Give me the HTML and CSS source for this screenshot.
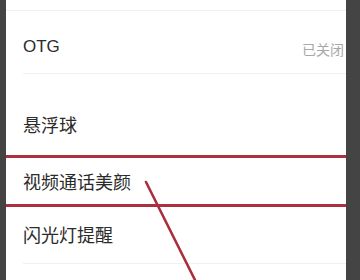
FILE: index.html
```html
<!DOCTYPE html>
<html lang="zh-CN">
<head>
<meta charset="utf-8">
<title>设置</title>
<link rel="stylesheet" href="styles.css">
</head>
<body>
<div class="frame">
  <div class="edge edge-left"></div>
  <div class="list">
    <div class="row row-top"></div>
    <div class="row row-otg">
      <span class="label label-latin">OTG</span>
      <span class="status">已关闭</span>
    </div>
    <div class="row row-float">
      <span class="label">悬浮球</span>
    </div>
    <div class="row row-video">
      <span class="label">视频通话美颜</span>
    </div>
    <div class="row row-flash">
      <span class="label">闪光灯提醒</span>
    </div>
    <svg class="arrow" width="340" height="280" viewBox="0 0 340 280" aria-hidden="true">
      <line x1="140" y1="182" x2="194" y2="290" stroke="#a92f3d" stroke-width="2.6" stroke-linecap="round"/>
    </svg>
  </div>
  <div class="edge edge-right"></div>
</div>
</body>
</html>
```
FILE: styles.css
```css
html, body {
  margin: 0;
  padding: 0;
  background: #ffffff;
}

.frame {
  display: flex;
  width: 360px;
  height: 280px;
  overflow: hidden;
  font-family: "Liberation Sans", "Noto Sans CJK SC", sans-serif;
}

.edge {
  flex: none;
  background: #444444;
}

.edge-left {
  width: 6px;
}

.edge-right {
  width: 14px;
}

.list {
  position: relative;
  flex: none;
  width: 340px;
  display: flex;
  flex-direction: column;
  background: #ffffff;
}

.row {
  display: flex;
  align-items: center;
  box-sizing: border-box;
  padding-left: 17px;
}

.row-top {
  height: 11px;
  border-bottom: 1px solid #f1f1f1;
}

.row-otg {
  height: 63px;
  padding-top: 9px;
  padding-right: 2px;
  justify-content: space-between;
  border-bottom: 1px solid #f0f0f0;
  margin-left: 17px;
  padding-left: 0;
}

.row-float {
  height: 81px;
  padding-top: 22px;
}

.row-video {
  height: 52px;
  padding-top: 3px;
  border-top: 3px solid #ad3040;
  border-bottom: 3px solid #ad3040;
}

.row-flash {
  height: 57px;
  padding-top: 2px;
  margin-left: 17px;
  padding-left: 0;
  border-bottom: 1px solid #f0f0f0;
}

.label {
  font-size: 18px;
  color: #2b2b2b;
  line-height: 1;
}

.label-latin {
  font-size: 17px;
}

.status {
  font-size: 14px;
  color: #a8a8a8;
  line-height: 1;
  margin-top: 6px;
}

.arrow {
  position: absolute;
  left: 0;
  top: 0;
  pointer-events: none;
}
```
